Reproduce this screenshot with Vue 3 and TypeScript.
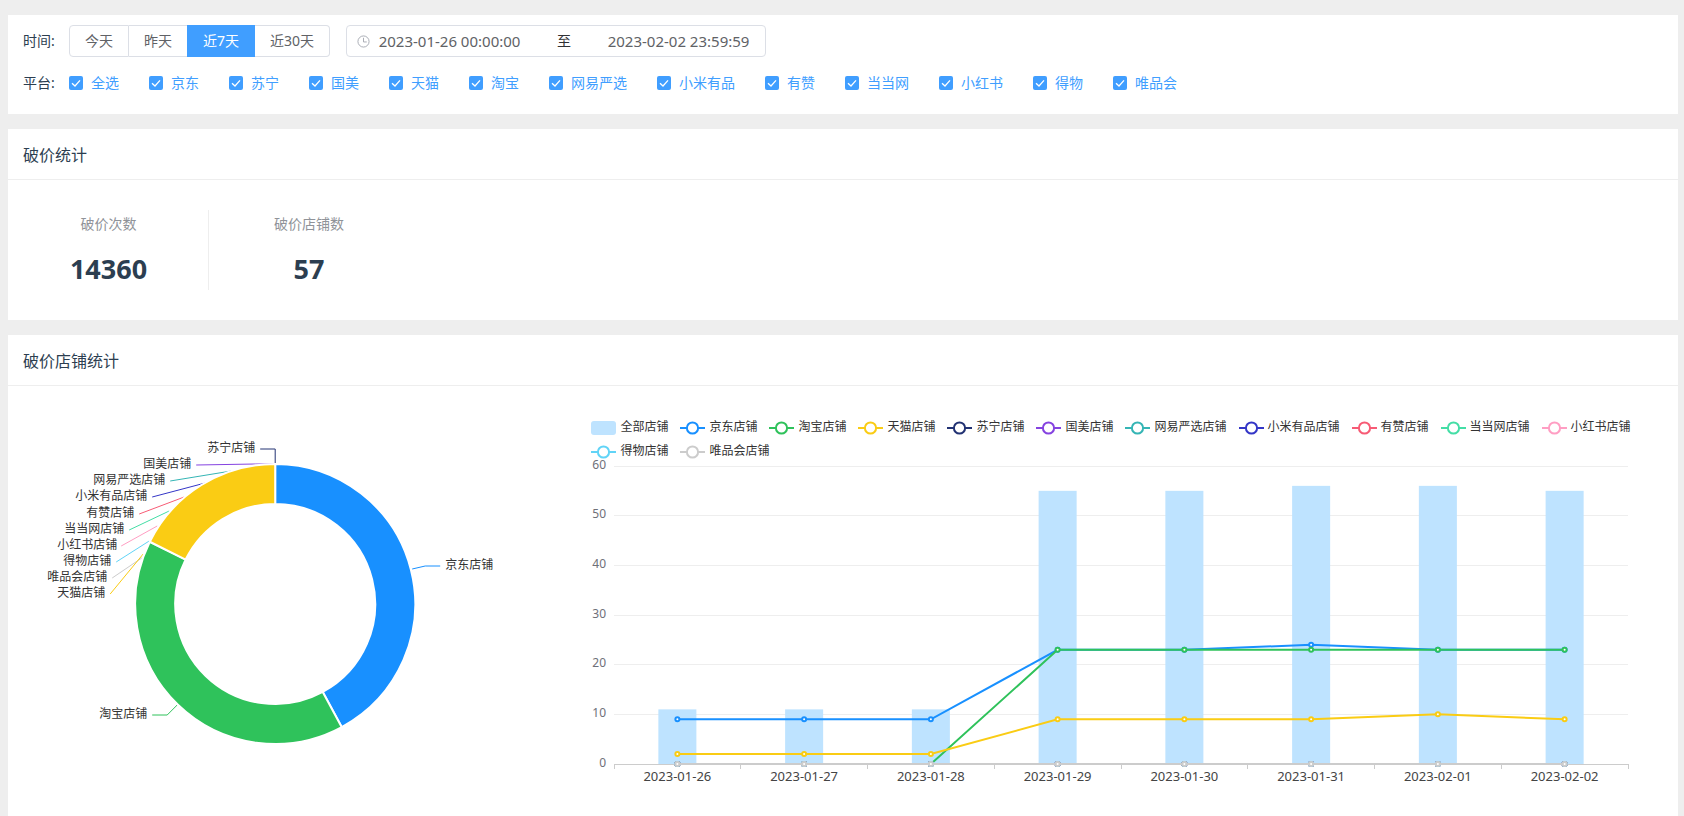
<script setup lang="ts">
import { computed, onBeforeUnmount, onMounted, ref } from 'vue'

interface Series {
  name: string
  color: string
  values: number[]
}

interface PieLabel {
  name: string
  color: string
  x: number
  y: number
  anchor: 'start' | 'end'
  line: string
}

const ranges = ['今天', '昨天', '近7天', '近30天']
const range = ref('近7天')
const startTime = ref('2023-01-26 00:00:00')
const endTime = ref('2023-02-02 23:59:59')

const platforms = [
  '全选', '京东', '苏宁', '国美', '天猫', '淘宝', '网易严选',
  '小米有品', '有赞', '当当网', '小红书', '得物', '唯品会',
]
const checked = ref<string[]>([...platforms])

const stats = [
  { label: '破价次数', value: 14360 },
  { label: '破价店铺数', value: 57 },
]

/* Donut, in coordinates relative to its centre */
const OUTER = 140
const INNER = 100

function point(radius: number, degrees: number): string {
  const a = (degrees * Math.PI) / 180
  return `${(radius * Math.sin(a)).toFixed(2)} ${(-radius * Math.cos(a)).toFixed(2)}`
}

function ring(from: number, to: number): string {
  const large = to - from > 180 ? 1 : 0
  return (
    `M${point(OUTER, from)}A${OUTER} ${OUTER} 0 ${large} 1 ${point(OUTER, to)}` +
    `L${point(INNER, to)}A${INNER} ${INNER} 0 ${large} 0 ${point(INNER, from)}Z`
  )
}

const slices = [
  { name: '京东店铺', color: '#1890ff', path: ring(0, 151.6) },
  { name: '淘宝店铺', color: '#2fc25b', path: ring(151.6, 296.4) },
  { name: '天猫店铺', color: '#facc14', path: ring(296.4, 360) },
]

const pieLabels: PieLabel[] = [
  { name: '苏宁店铺', color: '#223273', x: -20, y: -156, anchor: 'end', line: '-15,-155 0,-155 0,-140' },
  { name: '国美店铺', color: '#8543e0', x: -84, y: -140, anchor: 'end', line: '-79,-139 -20,-140 0,-140' },
  { name: '网易严选店铺', color: '#35b5b5', x: -110, y: -124, anchor: 'end', line: '-105,-123 -44,-133' },
  { name: '小米有品店铺', color: '#3436c7', x: -128, y: -108, anchor: 'end', line: '-123,-107 -70,-121' },
  { name: '有赞店铺', color: '#f75b75', x: -141, y: -91, anchor: 'end', line: '-136,-90 -91,-107' },
  { name: '当当网店铺', color: '#44dea6', x: -151, y: -75, anchor: 'end', line: '-146,-74 -106,-93' },
  { name: '小红书店铺', color: '#ff9ec3', x: -158, y: -59, anchor: 'end', line: '-154,-58 -118,-78' },
  { name: '得物店铺', color: '#61d4f7', x: -164, y: -43, anchor: 'end', line: '-159,-42 -126,-63' },
  { name: '唯品会店铺', color: '#cccccc', x: -168, y: -27, anchor: 'end', line: '-163,-26 -132,-47' },
  { name: '天猫店铺', color: '#facc14', x: -170, y: -11, anchor: 'end', line: '-165,-10 -132,-50' },
  { name: '京东店铺', color: '#1890ff', x: 170, y: -39, anchor: 'start', line: '137,-35 150,-38 165,-38' },
  { name: '淘宝店铺', color: '#2fc25b', x: -128, y: 110, anchor: 'end', line: '-123,111 -108,111 -98,101' },
]

/* Trend chart */
const BAR_NAME = '全部店铺'
const BAR_COLOR = '#bee3ff'
const PLOT_TOP = 3
const PLOT_HEIGHT = 298
const BASE = PLOT_TOP + PLOT_HEIGHT
const LEFT = 72
const RIGHT = 50

const days = [
  '2023-01-26', '2023-01-27', '2023-01-28', '2023-01-29',
  '2023-01-30', '2023-01-31', '2023-02-01', '2023-02-02',
]
const totals = [11, 11, 11, 55, 55, 56, 56, 55]
const none = days.map(() => 0)
const series: Series[] = [
  { name: '京东店铺', color: '#1890ff', values: [9, 9, 9, 23, 23, 24, 23, 23] },
  { name: '淘宝店铺', color: '#2fc25b', values: [0, 0, 0, 23, 23, 23, 23, 23] },
  { name: '天猫店铺', color: '#facc14', values: [2, 2, 2, 9, 9, 9, 10, 9] },
  { name: '苏宁店铺', color: '#223273', values: none },
  { name: '国美店铺', color: '#8543e0', values: none },
  { name: '网易严选店铺', color: '#35b5b5', values: none },
  { name: '小米有品店铺', color: '#3436c7', values: none },
  { name: '有赞店铺', color: '#f75b75', values: none },
  { name: '当当网店铺', color: '#44dea6', values: none },
  { name: '小红书店铺', color: '#ff9ec3', values: none },
  { name: '得物店铺', color: '#61d4f7', values: none },
  { name: '唯品会店铺', color: '#cccccc', values: none },
]
const steps = [0, 10, 20, 30, 40, 50, 60]

const hidden = ref<string[]>([])
function toggle(name: string): void {
  hidden.value = hidden.value.includes(name)
    ? hidden.value.filter((n) => n !== name)
    : [...hidden.value, name]
}

const trend = ref<HTMLElement | null>(null)
const chartWidth = ref(1136)
let observer: ResizeObserver | undefined

function measure(): void {
  if (trend.value) chartWidth.value = trend.value.clientWidth
}

onMounted(() => {
  measure()
  if (trend.value) {
    observer = new ResizeObserver(measure)
    observer.observe(trend.value)
  }
})
onBeforeUnmount(() => observer?.disconnect())

const band = computed(() => (chartWidth.value - LEFT - RIGHT) / days.length)
const plotRight = computed(() => chartWidth.value - RIGHT)

function yOf(value: number): number {
  return BASE - (value / 60) * PLOT_HEIGHT
}
function rowOf(value: number): number {
  return Math.floor(yOf(value)) + 0.5
}
function xOf(index: number): number {
  return LEFT + band.value * (index + 0.5)
}
function tickX(index: number): number {
  return Math.floor(LEFT + band.value * index) + 0.5
}

const visible = computed(() =>
  series
    .filter((s) => !hidden.value.includes(s.name))
    .map((s) => {
      const dots = s.values.map((v, i) => ({ x: xOf(i), y: yOf(v) }))
      return { ...s, dots, points: dots.map((d) => `${d.x},${d.y}`).join(' ') }
    }),
)
</script>

<template>
  <main class="page">
    <section class="card filters">
      <div class="row">
        <span id="range-label" class="row-label">时间:</span>
        <div class="segments" role="radiogroup" aria-labelledby="range-label">
          <label v-for="r in ranges" :key="r" class="segment" :class="{ active: range === r }">
            <input v-model="range" type="radio" name="range" :value="r" />
            {{ r }}
          </label>
        </div>
        <div class="picker">
          <svg class="clock" viewBox="0 0 14 14" aria-hidden="true">
            <circle cx="7" cy="7" r="6" />
            <path d="M7 3V7.5H10.5" />
          </svg>
          <input v-model="startTime" type="text" aria-label="开始时间" />
          <span class="to">至</span>
          <input v-model="endTime" type="text" aria-label="结束时间" />
        </div>
      </div>
      <div class="row">
        <span class="row-label">平台:</span>
        <div class="checks">
          <label v-for="p in platforms" :key="p" class="check">
            <input v-model="checked" type="checkbox" :value="p" />
            <svg class="box" viewBox="0 0 14 14" aria-hidden="true">
              <path d="M3 7.2L6 10L11 4.4" />
            </svg>
            <span>{{ p }}</span>
          </label>
        </div>
      </div>
    </section>

    <section class="card">
      <h2>破价统计</h2>
      <div class="stats">
        <div v-for="s in stats" :key="s.label" class="stat">
          <span class="stat-label">{{ s.label }}</span>
          <strong>{{ s.value }}</strong>
        </div>
      </div>
    </section>

    <section class="card last">
      <h2>破价店铺统计</h2>
      <div class="charts">
        <svg class="pie" role="img" aria-label="破价店铺占比">
          <svg x="50%" y="218" overflow="visible">
            <polyline
              v-for="l in pieLabels"
              :key="l.name"
              class="leader"
              :points="l.line"
              :stroke="l.color"
            />
            <path v-for="s in slices" :key="s.name" class="slice" :d="s.path" :fill="s.color" />
            <text
              v-for="l in pieLabels"
              :key="l.name"
              class="pie-label"
              :x="l.x"
              :y="l.y + 4"
              :text-anchor="l.anchor"
            >{{ l.name }}</text>
          </svg>
        </svg>

        <div ref="trend" class="trend">
          <div class="legend">
            <button
              type="button"
              :class="{ off: hidden.includes(BAR_NAME) }"
              @click="toggle(BAR_NAME)"
            >
              <svg viewBox="0 0 25 14" aria-hidden="true">
                <rect width="25" height="14" rx="3" :fill="BAR_COLOR" />
              </svg>
              {{ BAR_NAME }}
            </button>
            <button
              v-for="s in series"
              :key="s.name"
              type="button"
              :class="{ off: hidden.includes(s.name) }"
              @click="toggle(s.name)"
            >
              <svg viewBox="0 0 25 14" aria-hidden="true">
                <path d="M0 7H25" :stroke="s.color" stroke-width="2" />
                <circle cx="12.5" cy="7" r="5.6" fill="#fff" :stroke="s.color" stroke-width="2" />
              </svg>
              {{ s.name }}
            </button>
          </div>

          <svg class="plot" role="img" aria-label="破价店铺趋势">
            <g v-for="v in steps" :key="v">
              <line
                v-if="v > 0"
                class="grid"
                :x1="LEFT"
                :x2="plotRight"
                :y1="rowOf(v)"
                :y2="rowOf(v)"
              />
              <text class="y-label" :x="LEFT - 8" :y="rowOf(v) + 2" text-anchor="end">{{ v }}</text>
            </g>
            <line class="axis" :x1="LEFT" :x2="plotRight" :y1="rowOf(0)" :y2="rowOf(0)" />
            <line
              v-for="n in days.length + 1"
              :key="n"
              class="axis"
              :x1="tickX(n - 1)"
              :x2="tickX(n - 1)"
              :y1="BASE"
              :y2="BASE + 5"
            />
            <template v-if="!hidden.includes(BAR_NAME)">
              <rect
                v-for="(t, i) in totals"
                :key="i"
                :x="xOf(i) - band * 0.15"
                :y="yOf(t)"
                :width="band * 0.3"
                :height="BASE - yOf(t)"
                :fill="BAR_COLOR"
              />
            </template>
            <g v-for="s in visible" :key="s.name" :stroke="s.color" stroke-width="2">
              <polyline :points="s.points" fill="none" />
              <circle v-for="(d, i) in s.dots" :key="i" :cx="d.x" :cy="d.y" r="2" fill="#fff" />
            </g>
            <text
              v-for="(d, i) in days"
              :key="d"
              class="x-label"
              :x="xOf(i)"
              :y="BASE + 17"
              text-anchor="middle"
            >{{ d }}</text>
          </svg>
        </div>
      </div>
    </section>
  </main>
</template>

<style>
body {
  margin: 0;
  background: #eee;
}
</style>

<style scoped>
.page {
  box-sizing: border-box;
  min-height: 100vh;
  display: flex;
  flex-direction: column;
  gap: 15px;
  padding: 15px 6px 0 8px;
  font: 14px/20px "Noto Sans", "Noto Sans CJK SC", sans-serif;
  color: #2c3e50;
}
.card {
  background: #fff;
}
.last {
  flex: 1;
}
.filters {
  display: flex;
  flex-direction: column;
  gap: 16px;
  padding: 10px 15px 21px;
}
.row {
  display: flex;
  align-items: center;
}
.row-label {
  width: 46px;
}
.segments {
  display: flex;
  margin-right: 16px;
}
.segment {
  box-sizing: border-box;
  height: 32px;
  padding: 0 15px;
  border: 1px solid #dcdfe6;
  border-left-width: 0;
  line-height: 29px;
  color: #606266;
  cursor: pointer;
}
.segment:first-child {
  border-left-width: 1px;
  border-radius: 4px 0 0 4px;
}
.segment:last-child {
  border-radius: 0 4px 4px 0;
}
.segment.active {
  background: #409eff;
  border-color: #409eff;
  box-shadow: -1px 0 0 #409eff;
  color: #fff;
}
.segment input,
.check input {
  position: absolute;
  opacity: 0;
  margin: 0;
  pointer-events: none;
}
.picker {
  box-sizing: border-box;
  display: flex;
  align-items: center;
  width: 420px;
  height: 32px;
  padding: 0 7px 0 10px;
  border: 1px solid #dcdfe6;
  border-radius: 4px;
}
.clock {
  flex: none;
  width: 13px;
  height: 13px;
  fill: none;
  stroke: #a4a8b0;
}
.picker input {
  flex: 1;
  min-width: 0;
  padding: 0 0 1px;
  border: 0;
  outline: 0;
  background: none;
  font: inherit;
  font-size: 15px;
  text-align: center;
  color: #606266;
}
.to {
  width: 70px;
  text-align: center;
  color: #303133;
}
.checks {
  display: flex;
  flex-wrap: wrap;
  gap: 0 30px;
}
.check {
  display: flex;
  align-items: center;
  gap: 8px;
  color: #409eff;
  cursor: pointer;
}
.box {
  box-sizing: border-box;
  width: 14px;
  height: 14px;
  border-radius: 2px;
  background: #fff;
  box-shadow: inset 0 0 0 1px #dcdfe6;
  fill: none;
  stroke: #fff;
  stroke-width: 1.3;
}
.check input:checked + .box {
  background: #409eff;
  box-shadow: none;
}
h2 {
  margin: 0;
  padding: 14px 15px 12px;
  border-bottom: 1px solid #eee;
  font-size: 16px;
  line-height: 24px;
  font-weight: 400;
}
.stats {
  display: flex;
  padding: 30px 0;
}
.stat {
  box-sizing: border-box;
  display: flex;
  flex-direction: column;
  align-items: center;
  gap: 20px;
  width: 201px;
  height: 80px;
  padding-top: 4px;
}
.stat + .stat {
  border-left: 1px solid #eee;
  margin-left: -1px;
}
.stat-label {
  color: #909399;
}
strong {
  font-size: 27px;
  line-height: 30px;
}
.charts {
  display: grid;
  grid-template-columns: 32fr 68fr;
}
.pie {
  width: 100%;
  height: 430px;
}
.leader {
  fill: none;
  stroke-width: 1;
}
.slice {
  stroke: #fff;
  stroke-width: 2;
  stroke-linejoin: bevel;
}
.pie-label {
  font-size: 12px;
  fill: #333;
}
.x-label {
  font-size: 13px;
  fill: #444;
}
.trend {
  min-width: 0;
  padding-top: 29px;
}
.legend {
  display: flex;
  flex-wrap: wrap;
  gap: 0 12px;
  padding: 0 40px 0 49px;
}
.legend button {
  display: flex;
  align-items: center;
  gap: 4px;
  height: 24px;
  padding: 0;
  border: 0;
  background: none;
  font: inherit;
  font-size: 12px;
  color: #333;
  cursor: pointer;
}
.legend button.off {
  opacity: 0.4;
}
.legend svg {
  width: 25px;
  height: 14px;
  margin-top: 2px;
}
.plot {
  display: block;
  width: 100%;
  height: 340px;
  overflow: visible;
}
.grid {
  stroke: #eee;
}
.axis {
  stroke: #ccc;
}
.y-label {
  font-size: 12px;
  fill: #6e7079;
}
</style>
